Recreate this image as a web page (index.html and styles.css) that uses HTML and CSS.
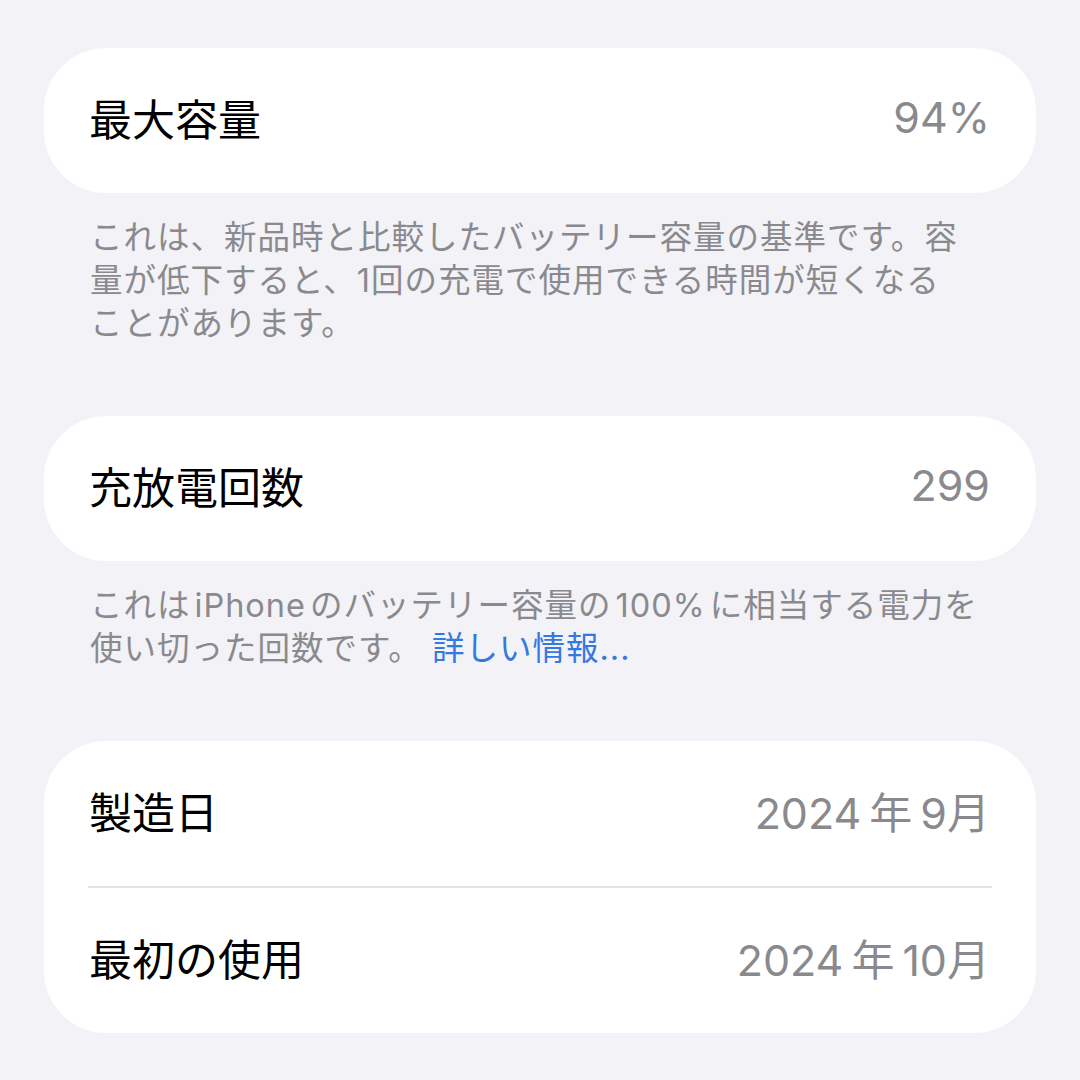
FILE: index.html
```html
<!DOCTYPE html>
<html lang="ja">
<head>
<meta charset="utf-8">
<link rel="stylesheet" href="styles.css">
</head>
<body>
<main class="page">
  <section class="group">
    <div class="card">
      <div class="row">
        <span class="label">最大容量</span>
        <span class="value">94%</span>
      </div>
    </div>
    <p class="note">これは、新品時と比較したバッテリー容量の基準です。容<br>量が低下すると、1回の充電で使用できる時間が短くなる<br>ことがあります。</p>
  </section>
  <section class="group">
    <div class="card">
      <div class="row">
        <span class="label">充放電回数</span>
        <span class="value">299</span>
      </div>
    </div>
    <p class="note">これは<span class="sp-s"></span>iPhone<span class="sp-s"></span>のバッテリー容量の<span class="sp-s"></span>100%<span class="sp-s"></span>に相当する電力を<br>使い切った回数です。 <a class="link" href="#">詳しい情報...</a></p>
  </section>
  <section class="group">
    <div class="card">
      <div class="row">
        <span class="label">製造日</span>
        <span class="value">2024<span class="sp"></span>年<span class="sp"></span>9月</span>
      </div>
      <div class="divider"></div>
      <div class="row">
        <span class="label">最初の使用</span>
        <span class="value">2024<span class="sp"></span>年<span class="sp"></span>10月</span>
      </div>
    </div>
  </section>
</main>
</body>
</html>
```

FILE: styles.css
```css
html, body {
  margin: 0;
  padding: 0;
  background: #f2f2f7;
}

body {
  font-family: Inter, "Noto Sans CJK JP", sans-serif;
  color: #000;
  -webkit-font-smoothing: antialiased;
}

.page {
  display: flex;
  flex-direction: column;
  gap: 71px;
  padding: 48px 44px 0 44px;
}

.group {
  display: flex;
  flex-direction: column;
}

.card {
  background: #ffffff;
  border-radius: 62px;
  display: flex;
  flex-direction: column;
}

.row {
  box-sizing: border-box;
  height: 145px;
  display: flex;
  align-items: center;
  justify-content: space-between;
  padding: 0 46px 8px 45px;
}

.label {
  font-size: 43px;
  font-weight: 400;
  color: #000;
}

.value {
  font-size: 43px;
  color: #8a8a8e;
}

.sp {
  display: inline-block;
  width: 8px;
}

.sp-s {
  display: inline-block;
  width: 4px;
}

.divider {
  height: 2px;
  background: #e3e3e8;
  margin: 0 44px;
}

.note {
  margin: 23px 0 0 0;
  padding: 0 40px 0 46px;
  font-size: 32.5px;
  letter-spacing: 1px;
  line-height: 43px;
  color: #8a8a8e;
  white-space: nowrap;
}

.link {
  color: #3478e0;
  text-decoration: none;
}
```
